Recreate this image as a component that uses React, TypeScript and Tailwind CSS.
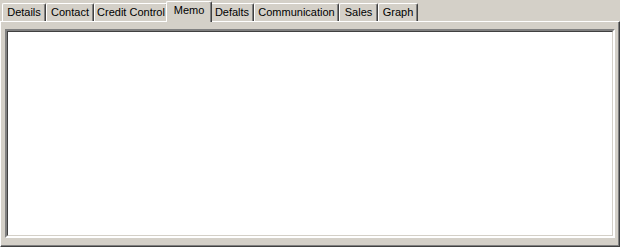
import React from "react";

const tabs = [
  { label: "Details", w: 44 },
  { label: "Contact", w: 48 },
  { label: "Credit Control", w: 74 },
  { label: "Memo", w: 42, selected: true },
  { label: "Defalts", w: 44 },
  { label: "Communication", w: 85 },
  { label: "Sales", w: 39 },
  { label: "Graph", w: 40 },
];

function Tab({ label, w, selected }: { label: string; w: number; selected?: boolean }) {
  if (selected) {
    return (
      <div
        className="relative z-10 -mx-[2px] mt-[1px] h-[21px] bg-[#d4d0c8] border-t border-l border-r border-t-white border-l-white border-r-[#404040] rounded-t-[2px] shadow-[inset_-1px_0_0_#808080] pt-[2px] text-center leading-[13px]"
        style={{ width: w + 4 }}
      >
        {label}
      </div>
    );
  }
  return (
    <div
      className="mt-[3px] h-[18px] bg-[#d4d0c8] border-t border-l border-r border-t-white border-l-white border-r-[#404040] rounded-t-[2px] shadow-[inset_-1px_0_0_#808080] pt-[2px] text-center leading-[13px]"
      style={{ width: w }}
    >
      {label}
    </div>
  );
}

export default function App() {
  return (
    <div
      className="w-[620px] h-[247px] bg-[#d4d0c8] flex flex-col text-[11px] text-black overflow-hidden"
      style={{ fontFamily: '"Liberation Sans", Arial, sans-serif' }}
    >
      <div className="flex h-[21px] pl-[2px] items-start">
        {tabs.map((t) => (
          <Tab key={t.label} {...t} />
        ))}
      </div>
      <div className="flex-1 flex flex-col border-t border-l border-r border-b border-t-white border-l-white border-r-[#404040] border-b-[#404040] shadow-[inset_-1px_-1px_0_#808080] pl-[4px] pt-[7px] pr-[4px] pb-[8px]">
        <div className="flex-1 bg-white border-2 border-t-[#808080] border-l-[#808080] border-r-white border-b-white">
          <div className="w-full h-full border border-t-[#404040] border-l-[#404040] border-r-[#d4d0c8] border-b-[#d4d0c8]" />
        </div>
      </div>
    </div>
  );
}
